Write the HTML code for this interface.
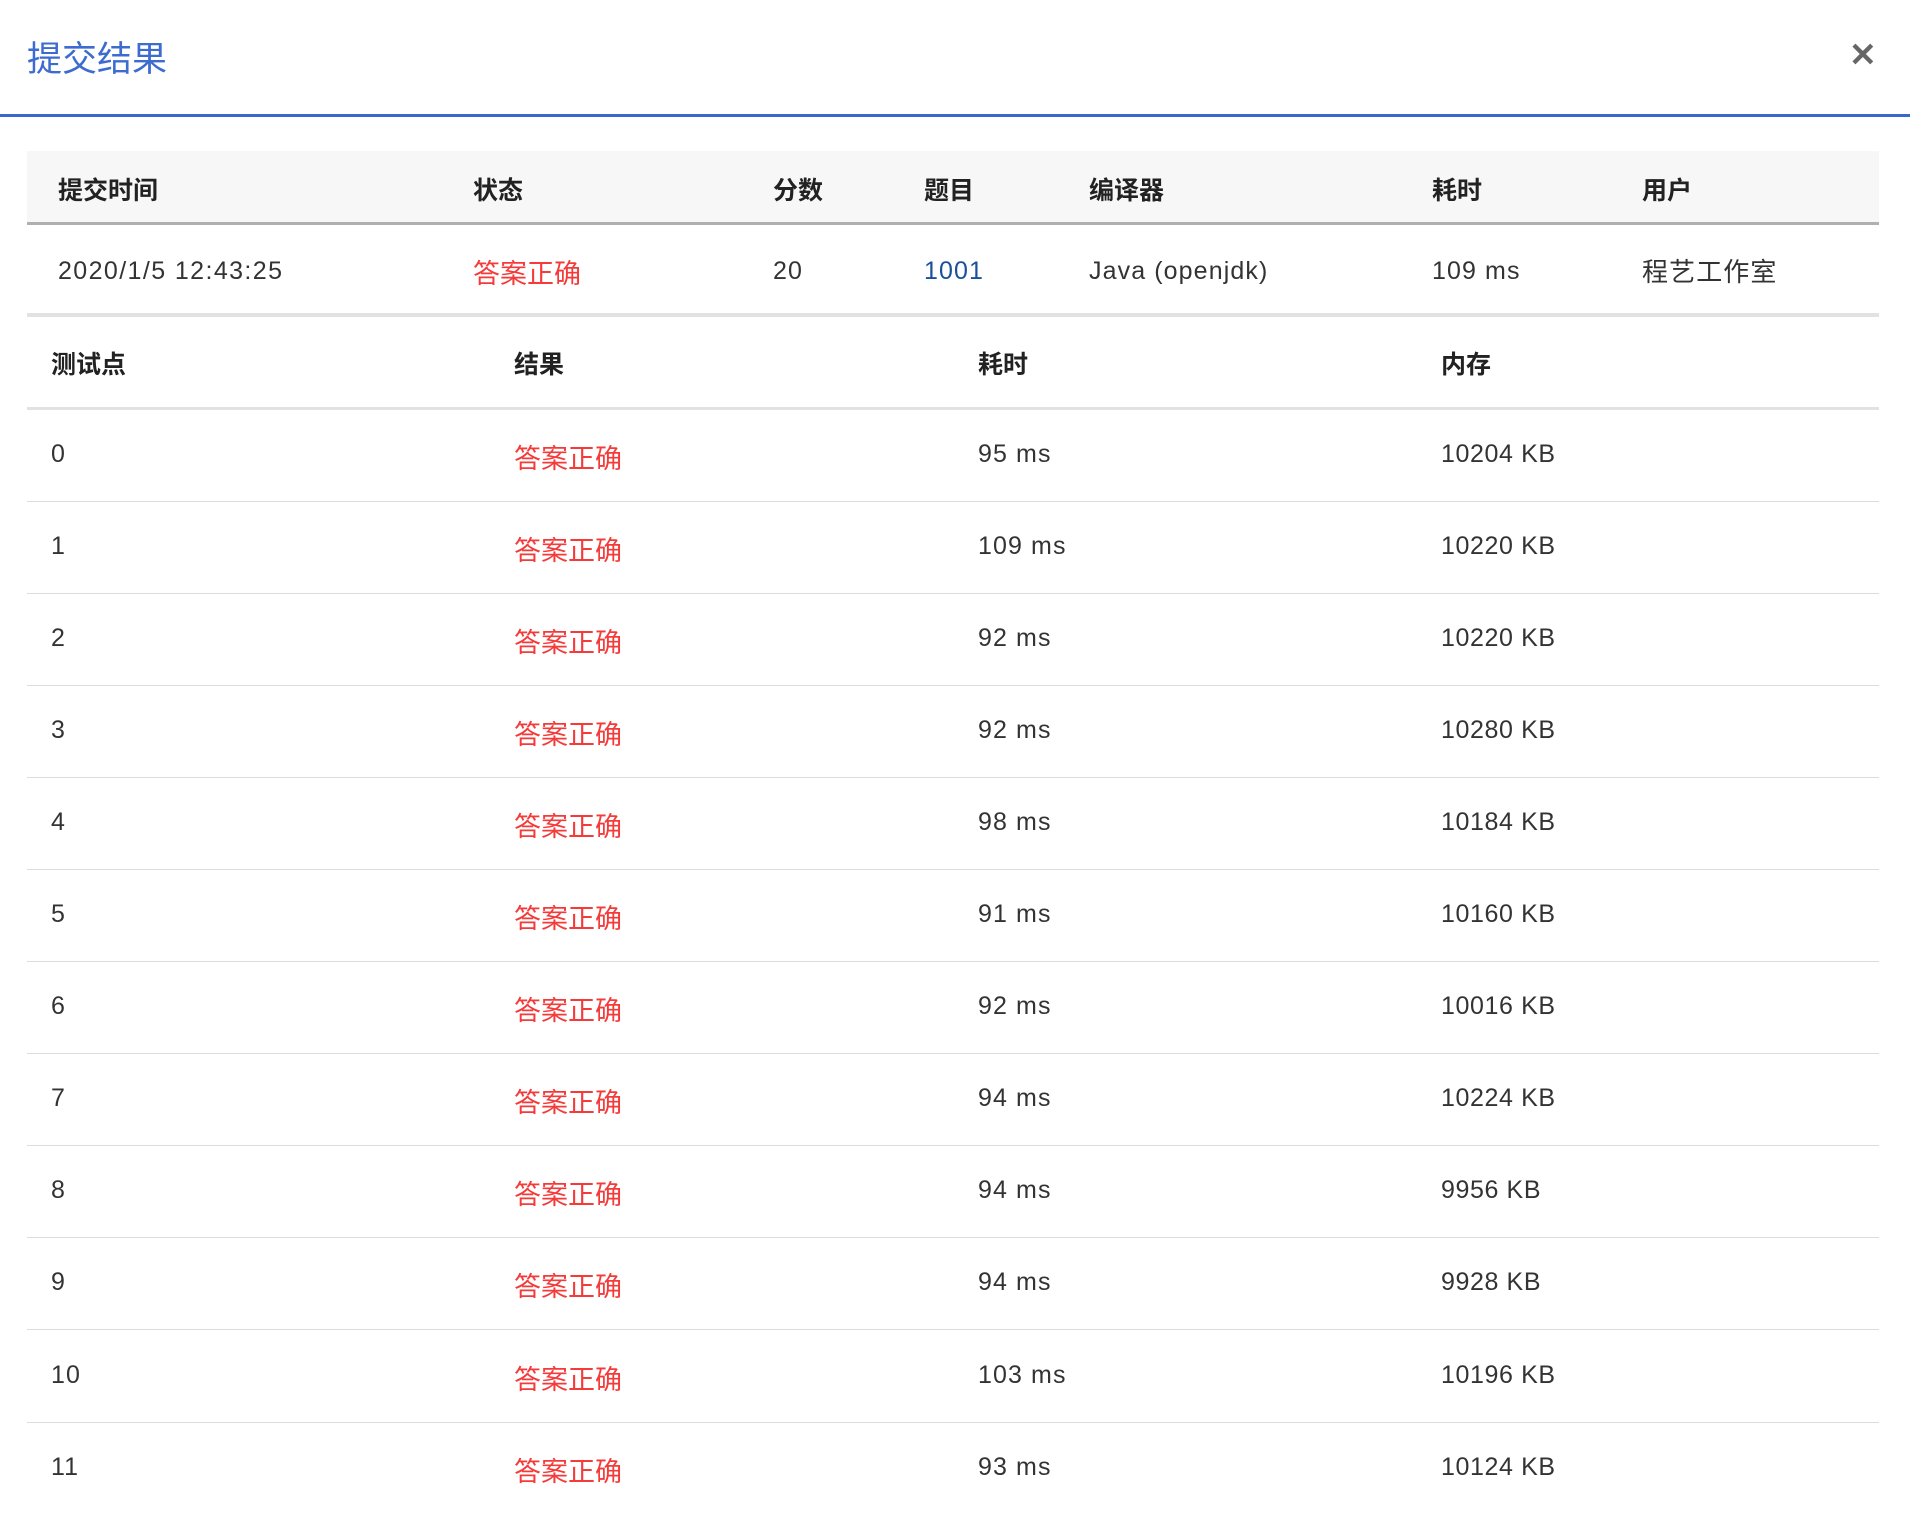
<!DOCTYPE html>
<html><head><meta charset="utf-8"><style>
*{margin:0;padding:0;box-sizing:border-box}
body{width:1910px;height:1526px;background:#fff;font-family:"Liberation Sans","Noto Sans CJK SC",sans-serif;color:#333;position:relative;overflow:hidden}
.title{position:absolute;left:27px;top:37px;font-size:35px;color:#3d6bd0;line-height:46px}
.close{position:absolute;left:1849px;top:37px;font-size:33px;color:#666;font-weight:bold;line-height:36px}
.bar{position:absolute;left:0;top:114px;width:1910px;height:3px;background:#3b68cf}
.abs{position:absolute;white-space:nowrap}
.h1{position:absolute;left:27px;top:151px;width:1852px;height:74px;background:#f7f7f7;border-bottom:3px solid #b0b0b0}
.b{font-weight:bold;font-size:25px;color:#222}
.t{font-size:25px;color:#333;letter-spacing:1.1px}
.red{color:#f53a3a;font-size:27px}
.line{position:absolute;left:27px;width:1852px;background:#e2e2e2}
</style></head><body>
<div class="title">提交结果</div>
<div class="close">✕</div>
<div class="bar"></div>
<div class="h1"></div>
<div class="abs b" style="left:58px;top:171px">提交时间</div>
<div class="abs b" style="left:473px;top:171px">状态</div>
<div class="abs b" style="left:773px;top:171px">分数</div>
<div class="abs b" style="left:924px;top:171px">题目</div>
<div class="abs b" style="left:1089px;top:171px">编译器</div>
<div class="abs b" style="left:1432px;top:171px">耗时</div>
<div class="abs b" style="left:1642px;top:171px">用户</div>

<div class="abs t" style="left:58px;top:257px;letter-spacing:1.4px">2020/1/5 12:43:25</div>
<div class="abs red" style="left:473px;top:252px">答案正确</div>
<div class="abs t" style="left:773px;top:257px">20</div>
<div class="abs t" style="left:924px;top:257px;color:#1a4f9c">1001</div>
<div class="abs t" style="left:1089px;top:257px">Java (openjdk)</div>
<div class="abs t" style="left:1432px;top:257px">109 ms</div>
<div class="abs t" style="left:1642px;top:252px;font-size:26px">程艺工作室</div>
<div class="line" style="top:313px;height:4px"></div>

<div class="abs b" style="left:51px;top:345px">测试点</div>
<div class="abs b" style="left:514px;top:345px">结果</div>
<div class="abs b" style="left:978px;top:345px">耗时</div>
<div class="abs b" style="left:1441px;top:345px">内存</div>
<div class="line" style="top:407px;height:3px"></div>

<div id="rows"></div>
<script>
var d=[["95 ms","10204 KB"],["109 ms","10220 KB"],["92 ms","10220 KB"],["92 ms","10280 KB"],["98 ms","10184 KB"],["91 ms","10160 KB"],["92 ms","10016 KB"],["94 ms","10224 KB"],["94 ms","9956 KB"],["94 ms","9928 KB"],["103 ms","10196 KB"],["93 ms","10124 KB"]];
var h="";
for(var i=0;i<d.length;i++){var y=440+i*92.05;
h+='<div class="abs t" style="left:51px;top:'+y+'px">'+i+'</div>';
h+='<div class="abs red" style="left:514px;top:'+(y-3)+'px">答案正确</div>';
h+='<div class="abs t" style="left:978px;top:'+y+'px">'+d[i][0]+'</div>';
h+='<div class="abs t" style="left:1441px;top:'+y+'px;letter-spacing:0.6px">'+d[i][1]+'</div>';
if(i<11)h+='<div class="line" style="top:'+(501+i*92.05)+'px;height:1px;background:#dcdcdc"></div>';}
document.getElementById("rows").innerHTML=h;
</script>
</body></html>
